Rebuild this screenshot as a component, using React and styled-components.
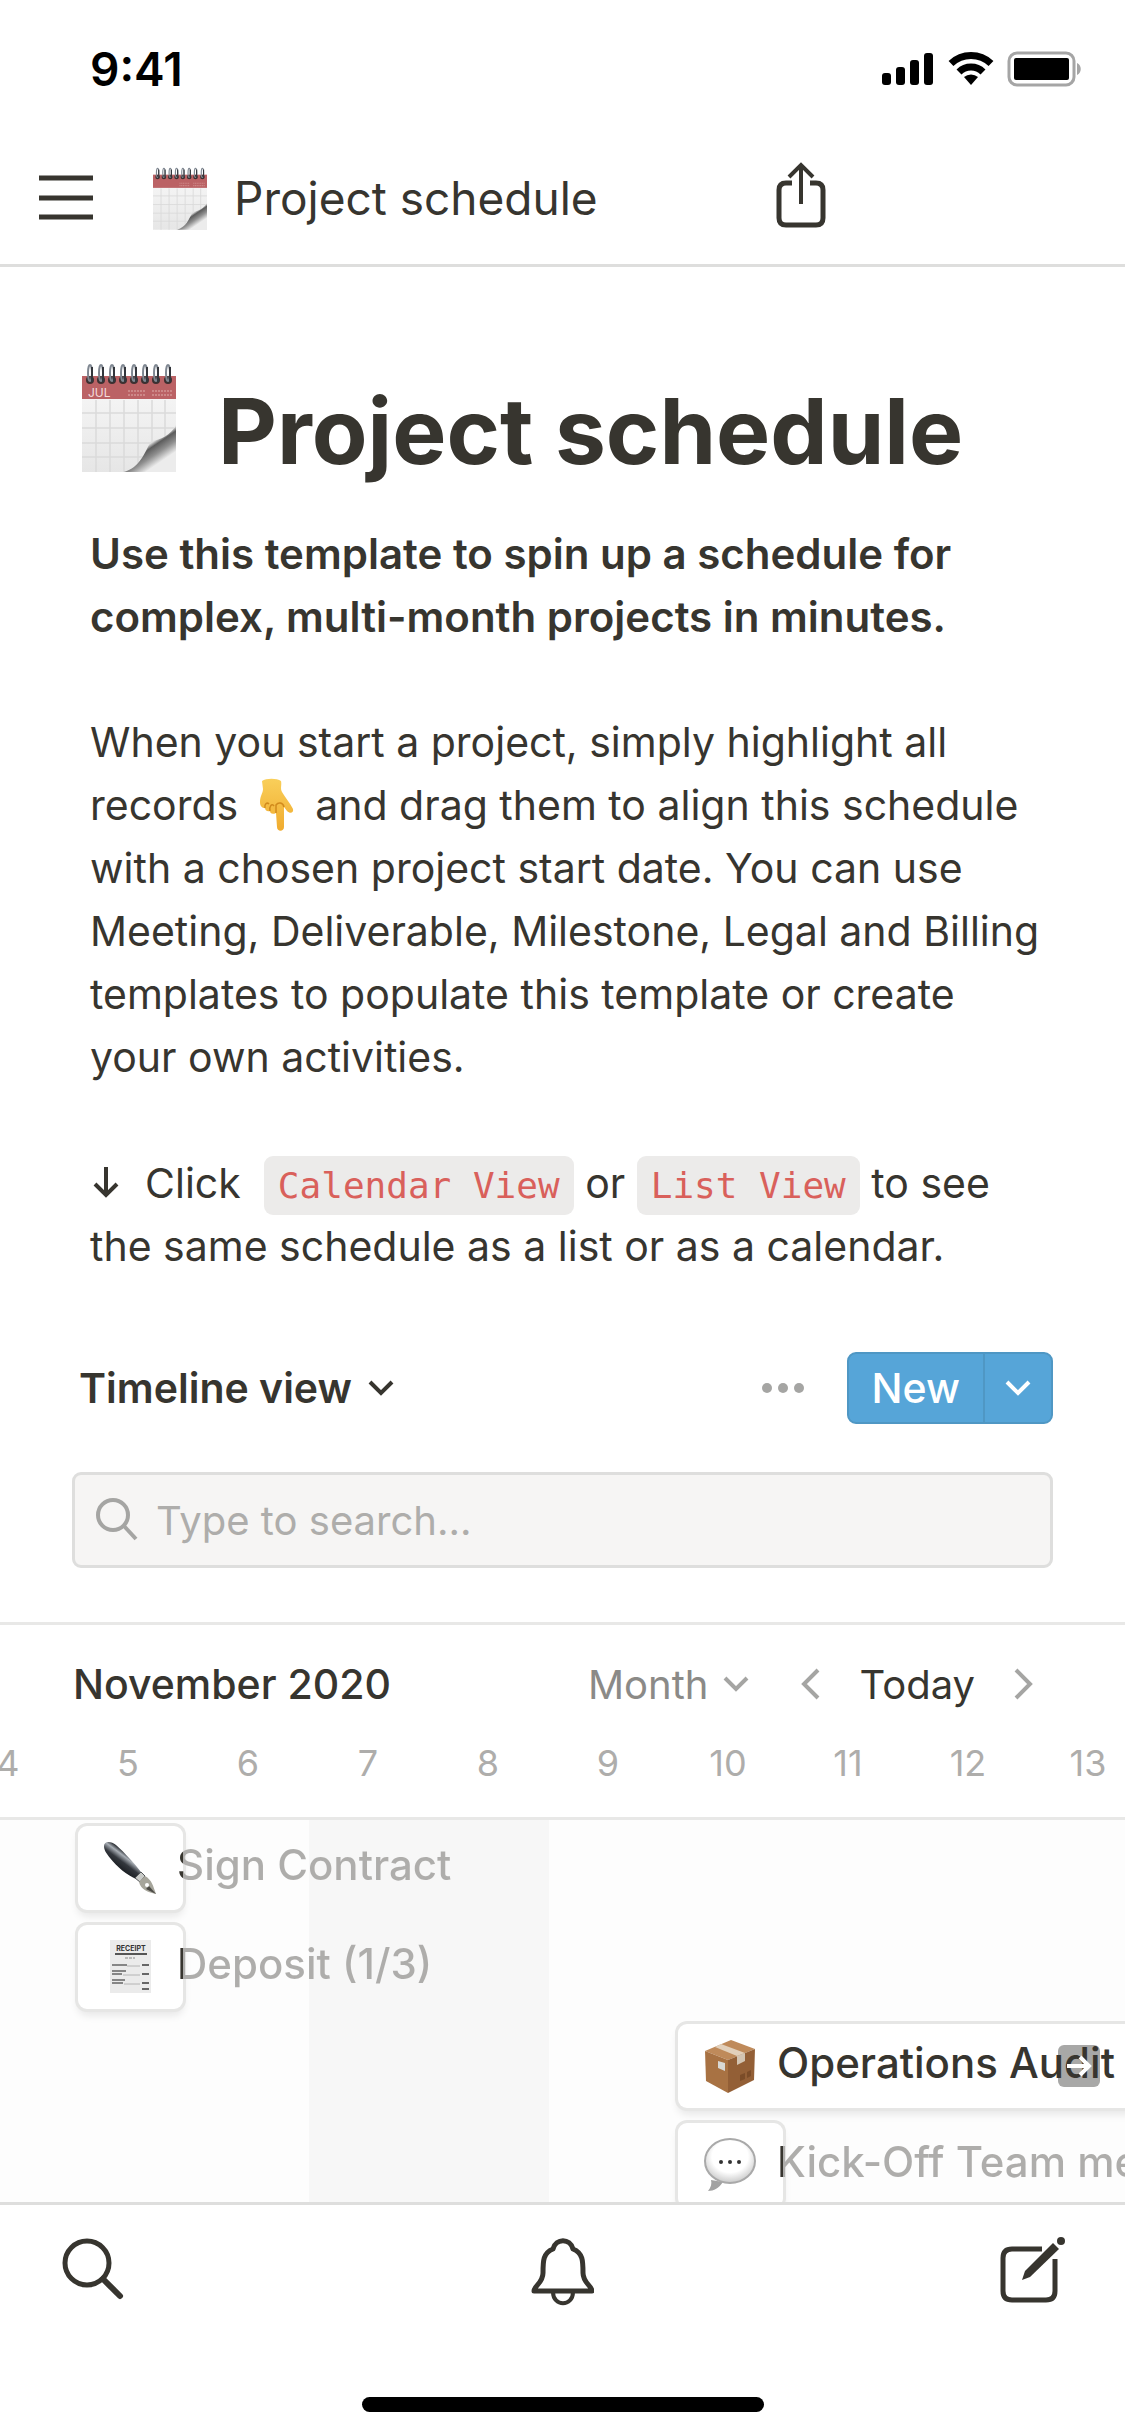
import styled, { createGlobalStyle } from "styled-components";

const GlobalStyle = createGlobalStyle`
* {
  box-sizing: border-box;
}
body {
  margin: 0;
  background-color: #ffffff;
  color: #37352f;
  font-family: Inter, "Liberation Sans", sans-serif;
}
button {
  border: none;
  padding: 0;
  background: none;
  color: inherit;
  font-family: inherit;
}
svg {
  display: block;
  flex-shrink: 0;
}
`;

const days = [4, 5, 6, 7, 8, 9, 10, 11, 12, 13];

const CalendarIcon = ({ size, label }) => (
  <svg width={size} height={Math.round(size * 1.16)} viewBox="0 0 94 109" aria-hidden="true">
    <defs>
      <linearGradient id="paper" x1="0" y1="0" x2="0" y2="1">
        <stop offset="0" stopColor="#f8f8f8" />
        <stop offset="1" stopColor="#e6e6e6" />
      </linearGradient>
      <linearGradient id="curl" x1="0.2" y1="0.1" x2="0.8" y2="0.9">
        <stop offset="0.2" stopColor="#fafafa" />
        <stop offset="0.42" stopColor="#dcdcdc" />
        <stop offset="0.5" stopColor="#5c5c5c" />
        <stop offset="0.66" stopColor="#8f8f8f" />
        <stop offset="0.85" stopColor="#ececec" />
      </linearGradient>
    </defs>
    <path d="M0 13H94V109H0Z" fill="url(#paper)" />
    <path d="M0 50H94M0 65H92M0 80H84M0 94H70M14 37V109M28 37V109M42 37V109M56 37V106M70 37V94M83 37V80" stroke="#dadada" strokeWidth="1.5" />
    <rect y="13" width="94" height="23" fill="#bb6265" />
    <path d="M42 109C58 104 62 91 69 78C78 77 89 72 94 62V109Z" fill="url(#curl)" />
    {label && <text x="6" y="34" fontSize="12" fill="#f4dcdc">JUL</text>}
    <path d="M46 28H64M46 32H64M70 28H90M70 32H90" stroke="#cd8888" strokeWidth="2" strokeDasharray="2 1" />
    {[8, 19, 30, 41, 52, 63, 74, 86].map((x) => (
      <g key={x} fill="none">
        <circle cx={x} cy="17" r="4" fill="#3c3031" />
        <ellipse cx={x} cy="10" rx="2" ry="8" stroke="#7f8791" strokeWidth="2" />
        <path d={`M${x + 2} 4V19`} stroke="#33363c" strokeWidth="2" />
      </g>
    ))}
  </svg>
);

const Chevron = () => (
  <svg width="26" height="18" viewBox="0 0 26 18" fill="none" stroke="currentColor" strokeWidth="4" aria-hidden="true">
    <path d="M2 3L13 14L24 3" />
  </svg>
);

const SideChevron = ({ right }) => (
  <svg width="22" height="32" viewBox="0 0 22 32" fill="none" stroke="#a5a5a3" strokeWidth="4" aria-hidden="true">
    <path d={right ? "M3 2L17 16L3 30" : "M19 2L5 16L19 30"} />
  </svg>
);

const PenIcon = () => (
  <svg width="54" height="54" viewBox="0 0 54 54" aria-hidden="true">
    <defs>
      <linearGradient id="pen" x1="0.3" y1="0.7" x2="0.6" y2="0.3">
        <stop offset="0" stopColor="#16191d" />
        <stop offset="0.5" stopColor="#33373d" />
        <stop offset="0.8" stopColor="#a9afb6" />
        <stop offset="1" stopColor="#2d3136" />
      </linearGradient>
    </defs>
    <path d="M1 5C1 0 8 0 13 4C22 12 31 22 38 31L33 38C24 34 14 26 7 17C3 12 1 9 1 5Z" fill="url(#pen)" />
    <path d="M38 31L42 35L37 41L32 37Z" fill="#c9cbc8" stroke="#55585a" />
    <path d="M42 35C49 39 50 45 53 53C45 51 38 49 36 41Z" fill="#a6a59b" />
    <path d="M46 45L53 53L43 48Z" fill="#4b4a45" />
    <circle cx="44" cy="44" r="2" fill="#ffffff" />
  </svg>
);

const ReceiptIcon = () => (
  <svg width="54" height="54" viewBox="0 0 54 54" aria-hidden="true">
    <rect x="7" y="0" width="41" height="53" fill="#ebebeb" />
    <text x="28" y="11" fontSize="7" fontWeight="700" textAnchor="middle" fill="#333333">RECEIPT</text>
    <path d="M12 14H44" stroke="#555555" strokeWidth="2" />
    <path d="M22 18H32" stroke="#888888" strokeDasharray="3 1" />
    <path d="M9 25H24M9 31H23M9 34H19M9 40H22M9 43H20" stroke="#666666" strokeWidth="1.5" />
    <path d="M24 26H37M20 35H37M21 44H37" stroke="#b4b4b4" />
    <path d="M39 25H46M39 34H46M39 43H46M39 49H46" stroke="#666666" strokeWidth="2" />
  </svg>
);

const BoxIcon = () => (
  <svg width="54" height="54" viewBox="0 0 54 54" aria-hidden="true">
    <path d="M2 12L28 1L52 10L25 21Z" fill="#bf8a5a" />
    <path d="M2 12L25 21V54L3 42Z" fill="#a87243" />
    <path d="M25 21L52 10L51 41L25 54Z" fill="#935f36" />
    <path d="M12 8L18 5L42 14L34 17Z" fill="#e2d0bb" />
    <path d="M34 17L42 14V22L34 26Z" fill="#d3c4b2" />
    <path d="M15 22L22 24V32L15 29Z" fill="#d8d8d4" />
    <path d="M37 36L42 34V40L37 42ZM44 33L48 31V37L44 39Z" fill="#6b3f20" opacity="0.6" />
  </svg>
);

const BubbleIcon = () => (
  <svg width="54" height="54" viewBox="0 0 54 54" aria-hidden="true">
    <defs>
      <radialGradient id="bubble" cx="0.5" cy="0.4" r="0.6">
        <stop offset="0.6" stopColor="#ffffff" />
        <stop offset="1" stopColor="#c9c9c9" />
      </radialGradient>
    </defs>
    <path d="M5 53C8 49 9 46 8 42L20 44C16 50 11 53 5 53Z" fill="#a2a2a2" />
    <ellipse cx="27" cy="23" rx="25" ry="22" fill="url(#bubble)" stroke="#a9a9a9" strokeWidth="2" />
    <circle cx="18" cy="24" r="2" fill="#333333" />
    <circle cx="27" cy="24" r="2" fill="#333333" />
    <circle cx="36" cy="24" r="2" fill="#333333" />
  </svg>
);

const PointIcon = () => (
  <Finger viewBox="0 0 36 54" role="img" aria-label="pointing down">
    <defs>
      <linearGradient id="hand" x1="0" y1="0" x2="0" y2="1">
        <stop offset="0" stopColor="#f9cf5a" />
        <stop offset="1" stopColor="#f0ab2e" />
      </linearGradient>
    </defs>
    <path d="M3 3C7 0 18 0 22 3C23 7 21 10 23 14C26 19 31 25 34 31C35 35 31 36 28 33L25 29V49C25 54 18 54 18 49L17 35C13 37 11 35 11 33C8 34 6 32 6 30C3 30 1 28 1 24C1 18 4 15 4 11Z" fill="url(#hand)" />
    <path d="M6 30C5 26 8 24 10 26M11 33C10 28 13 25 15 28M17 35V27C19 24 24 24 25 29" fill="none" stroke="#d18a1c" strokeWidth="1.5" />
  </Finger>
);

const tasks = [
  { name: "Sign Contract", icon: <PenIcon />, start: 0 },
  { name: "Deposit (1/3)", icon: <ReceiptIcon />, start: 0 },
  { name: "Operations Audit", icon: <BoxIcon />, start: 5, long: true },
  { name: "Kick-Off Team meeting", icon: <BubbleIcon />, start: 5 },
];

const App = () => {
  return (
    <Screen>
      <GlobalStyle />
      <StatusBar>
        <Time>9:41</Time>
        <svg width="202" height="36" viewBox="0 0 202 36" aria-hidden="true">
          <rect x="0" y="22" width="9" height="12" rx="3" />
          <rect x="14" y="16" width="9" height="18" rx="3" />
          <rect x="28" y="9" width="9" height="25" rx="3" />
          <rect x="42" y="2" width="9" height="32" rx="3" />
          <g fill="none" stroke="#000000" strokeWidth="7">
            <path d="M69 12.5A29 29 0 0 1 109 12.5" />
            <path d="M77 21A17 17 0 0 1 101 21" />
          </g>
          <path d="M82 26A11 11 0 0 1 96 26L89 34Z" />
          <rect x="127" y="2" width="65" height="32" rx="8" fill="#ffffff" stroke="#a5a5a5" strokeWidth="3" />
          <rect x="132" y="7" width="55" height="22" rx="2" />
          <path d="M195 12C200 14 200 22 195 24Z" fill="#a5a5a5" />
        </svg>
      </StatusBar>
      <Header>
        <IconButton aria-label="Menu">
          <svg width="54" height="46" viewBox="0 0 54 46" stroke="#37352f" strokeWidth="5">
            <path d="M0 3H54M0 23H54M0 42H54" />
          </svg>
        </IconButton>
        <Crumb href="#">
          <CalendarIcon size={54} />
          Project schedule
        </Crumb>
        <IconButton aria-label="Share">
          <svg width="52" height="72" viewBox="0 0 52 72" fill="none" stroke="#37352f" strokeWidth="5">
            <path d="M17 21H11Q4 21 4 28V56Q4 63 11 63H41Q48 63 48 56V28Q48 21 41 21H35" />
            <path d="M26 42V4M14 15L26 3L38 15" strokeWidth="4" />
          </svg>
        </IconButton>
      </Header>
      <Page>
        <TitleRow>
          <CalendarIcon size={94} label />
          <Title>Project schedule</Title>
        </TitleRow>
        <Body>
          <Paragraph $strong>
            Use this template to spin up a schedule for<br />
            complex, multi-month projects in minutes.
          </Paragraph>
          <Paragraph>
            When you start a project, simply highlight all<br />
            records <PointIcon /> and drag them to align this schedule<br />
            with a chosen project start date. You can use<br />
            Meeting, Deliverable, Milestone, Legal and Billing<br />
            templates to populate this template or create<br />
            your own activities.
          </Paragraph>
          <Paragraph>
            <DownArrow viewBox="0 0 28 32" aria-hidden="true">
              <path d="M14 1V29M3 18L14 29L25 18" />
            </DownArrow>
            &nbsp; Click &nbsp;<Code>Calendar View</Code> or <Code>List View</Code> to see<br />
            the same schedule as a list or as a calendar.
          </Paragraph>
        </Body>
        <ViewBar>
          <ViewButton>
            Timeline view
            <Chevron />
          </ViewButton>
          <IconButton aria-label="More options">
            <svg width="44" height="12" viewBox="0 0 44 12" fill="#a5a5a3">
              <circle cx="6" cy="6" r="5" />
              <circle cx="22" cy="6" r="5" />
              <circle cx="38" cy="6" r="5" />
            </svg>
          </IconButton>
          <NewGroup>
            <NewButton>New</NewButton>
            <NewMenuButton aria-label="Templates">
              <Chevron />
            </NewMenuButton>
          </NewGroup>
        </ViewBar>
        <SearchBox>
          <svg width="42" height="44" viewBox="0 0 42 44" fill="none" stroke="#a5a5a3" strokeWidth="4" aria-hidden="true">
            <circle cx="17" cy="17" r="15" />
            <path d="M28 28L40 41" />
          </svg>
          <SearchInput type="text" placeholder="Type to search..." aria-label="Type to search" />
        </SearchBox>
      </Page>
      <TimelineHead>
        <MonthRow>
          <MonthName>November 2020</MonthName>
          <ScaleButton>
            Month
            <Chevron />
          </ScaleButton>
          <Pager>
            <IconButton aria-label="Previous">
              <SideChevron />
            </IconButton>
            <TodayButton>Today</TodayButton>
            <IconButton aria-label="Next">
              <SideChevron right />
            </IconButton>
          </Pager>
        </MonthRow>
        <DayRow>
          {days.map((day) => (
            <Day key={day}>{day}</Day>
          ))}
        </DayRow>
      </TimelineHead>
      <Timeline>
        {tasks.map((task) => (
          <TaskRow key={task.name} $start={task.start}>
            <TaskCard $long={task.long}>
              {task.icon}
              {task.long && <TaskName $inside>{task.name}</TaskName>}
              {task.long && (
                <Badge>
                  <BadgeArrow viewBox="0 0 28 28" aria-hidden="true">
                    <path d="M2 14H24M15 5L24 14L15 23" />
                  </BadgeArrow>
                </Badge>
              )}
            </TaskCard>
            {!task.long && <TaskName>{task.name}</TaskName>}
          </TaskRow>
        ))}
      </Timeline>
      <TabBar>
        <IconButton aria-label="Search">
          <svg width="64" height="64" viewBox="0 0 64 64" fill="none" stroke="#37352f" strokeWidth="5">
            <circle cx="26" cy="26" r="22" />
            <path d="M42 42L59 59" strokeWidth="6" strokeLinecap="round" />
          </svg>
        </IconButton>
        <IconButton aria-label="Notifications">
          <svg width="64" height="70" viewBox="0 0 64 70" fill="none" stroke="#37352f" strokeWidth="5" strokeLinejoin="round">
            <path d="M4 54C4 49 13 46 13 36C13 24 13 16 23 12C26 1 40 1 43 12C53 16 53 24 53 36C53 46 62 49 62 54Z" />
            <path d="M23 55C23 70 43 70 43 55" strokeWidth="4" />
          </svg>
        </IconButton>
        <IconButton aria-label="New page">
          <svg width="68" height="68" viewBox="0 0 68 68" fill="none" stroke="#37352f" strokeWidth="5">
            <path d="M43 12H13Q4 12 4 21V54Q4 63 13 63H47Q56 63 56 54V22" />
            <path d="M23 43L26 34L54 6L60 12L31 40Z" fill="#37352f" stroke="none" />
            <circle cx="62" cy="4" r="4" fill="#37352f" stroke="none" />
          </svg>
        </IconButton>
      </TabBar>
      <HomeIndicator />
    </Screen>
  );
};

export default App;

const Screen = styled.div`
min-height: 100vh;
display: flex;
flex-direction: column;
overflow: hidden;
`;

const StatusBar = styled.div`
display: flex;
justify-content: space-between;
align-items: center;
height: 132px;
padding: 6px 41px 0 90px;
`;

const Time = styled.div`
font-size: 46px;
font-weight: 600;
color: #000000;
`;

const Header = styled.header`
display: flex;
align-items: center;
height: 135px;
padding: 0 298px 0 39px;
border-bottom: 3px solid #dededd;
`;

const IconButton = styled.button`
display: flex;
align-items: center;
justify-content: center;
cursor: pointer;
`;

const Crumb = styled.a`
display: flex;
flex: 1;
align-items: center;
gap: 27px;
padding-left: 60px;
font-size: 46px;
color: inherit;
text-decoration: none;
`;

const Page = styled.main`
display: flex;
flex-direction: column;
padding: 96px 72px 54px;
`;

const TitleRow = styled.div`
display: flex;
align-items: flex-start;
gap: 42px;
padding-left: 10px;
`;

const Title = styled.h1`
margin: 12px 0 0;
font-size: 91px;
line-height: 112px;
font-weight: 700;
white-space: nowrap;
`;

const Body = styled.div`
display: flex;
flex-direction: column;
gap: 63px;
padding: 35px 0 0 18px;
`;

const Paragraph = styled.p`
margin: 0;
font-size: ${({ $strong }) => ($strong ? "42px" : "41px")};
line-height: 63px;
font-weight: ${({ $strong }) => ($strong ? 600 : 400)};
white-space: nowrap;
`;

const Finger = styled.svg`
display: inline-block;
width: 36px;
height: 54px;
margin: 0 9px;
vertical-align: -12px;
`;

const DownArrow = styled.svg`
display: inline-block;
width: 32px;
height: 32px;
fill: none;
stroke: #37352f;
stroke-width: 4px;
`;

const Code = styled.code`
padding: 9px 14px;
border-radius: 9px;
background-color: #ecebea;
color: #d9605b;
font-family: "DejaVu Sans Mono", monospace;
font-size: 36px;
line-height: 42px;
`;

const ViewBar = styled.div`
display: flex;
align-items: center;
height: 72px;
margin-top: 74px;
padding-left: 7px;
`;

const ViewButton = styled.button`
display: flex;
align-items: center;
gap: 16px;
margin-right: auto;
font-size: 41px;
font-weight: 600;
cursor: pointer;
`;

const NewGroup = styled.div`
display: flex;
height: 72px;
margin-left: 42px;
border: 2px solid #4f97c4;
border-radius: 9px;
background-color: #56a5d8;
color: #ffffff;
`;

const NewButton = styled.button`
padding: 0 23px;
font-size: 41px;
font-weight: 500;
cursor: pointer;
`;

const NewMenuButton = styled.button`
display: flex;
align-items: center;
padding: 0 20px;
border-left: 2px solid #4f97c4;
cursor: pointer;
`;

const SearchBox = styled.label`
display: flex;
align-items: center;
gap: 18px;
height: 96px;
margin-top: 48px;
padding: 0 21px;
border: 3px solid #dededd;
border-radius: 9px;
background-color: #f6f5f4;
`;

const SearchInput = styled.input`
flex: 1;
min-width: 0;
padding: 0;
border: none;
outline: none;
background: none;
color: inherit;
font-family: inherit;
font-size: 40px;
&::placeholder {
  color: #aeadab;
}
`;

const TimelineHead = styled.div`
border-top: 3px solid #e8e8e7;
border-bottom: 3px solid #e8e8e7;
`;

const MonthRow = styled.div`
display: flex;
align-items: center;
height: 118px;
padding: 0 90px 0 73px;
`;

const MonthName = styled.div`
margin-right: auto;
font-size: 41px;
font-weight: 500;
`;

const ScaleButton = styled.button`
display: flex;
align-items: center;
gap: 15px;
font-size: 40px;
color: #8b8a87;
cursor: pointer;
svg {
  color: #a5a5a3;
}
`;

const Pager = styled.div`
display: flex;
align-items: center;
gap: 38px;
margin-left: 50px;
`;

const TodayButton = styled.button`
font-size: 40px;
cursor: pointer;
`;

const DayRow = styled.div`
display: flex;
height: 74px;
margin-left: -52px;
`;

const Day = styled.div`
flex: 0 0 120px;
text-align: center;
font-size: 36px;
line-height: 40px;
color: #aeadab;
`;

const Timeline = styled.section`
display: flex;
flex: 1 0 382px;
flex-direction: column;
gap: 15px;
height: 382px;
padding: 6px 0 0 78px;
overflow: hidden;
background: linear-gradient(90deg, #fdfdfd 309px, #f7f7f7 309px, #f7f7f7 549px, #fdfdfd 549px);
`;

const TaskRow = styled.div`
display: flex;
flex: 0 0 84px;
padding-left: ${({ $start }) => $start * 120}px;
`;

const TaskCard = styled.div`
display: flex;
flex: 0 0 auto;
align-items: center;
width: ${({ $long }) => ($long ? "640px" : "105px")};
padding-left: 25px;
border-radius: 9px;
background-color: #ffffff;
box-shadow: 0 0 0 3px #e6e6e5, 0 6px 9px rgba(15, 15, 15, 0.1);
`;

// short bars end under the first letter, so the name changes colour there
const TaskName = styled.span`
align-self: flex-start;
z-index: 1;
margin-left: ${({ $inside }) => ($inside ? "18px" : "-8px")};
padding-left: 2px;
font-size: 42px;
line-height: 78px;
font-weight: 500;
white-space: nowrap;
color: ${({ $inside }) => ($inside ? "#37352f" : "#aeadab")};
${({ $inside }) => !$inside && `
background: linear-gradient(90deg, #37352f 8px, #aeadab 8px);
background-clip: text;
-webkit-text-fill-color: transparent;
`}
`;

const Badge = styled.span`
display: flex;
align-items: center;
justify-content: center;
flex-shrink: 0;
width: 42px;
height: 42px;
margin-left: -57px;
border-radius: 6px;
background-color: #a8a8a7;
box-shadow: 0 0 0 3px #ffffff;
`;

const BadgeArrow = styled.svg`
z-index: 2;
width: 28px;
height: 28px;
fill: none;
stroke: #ffffff;
stroke-width: 4px;
`;

const TabBar = styled.nav`
display: flex;
justify-content: space-between;
align-items: flex-start;
height: 195px;
padding: 32px 58px 0 61px;
border-top: 3px solid #dededd;
`;

const HomeIndicator = styled.div`
align-self: center;
width: 402px;
height: 15px;
margin-bottom: 24px;
border-radius: 8px;
background-color: #000000;
`;
